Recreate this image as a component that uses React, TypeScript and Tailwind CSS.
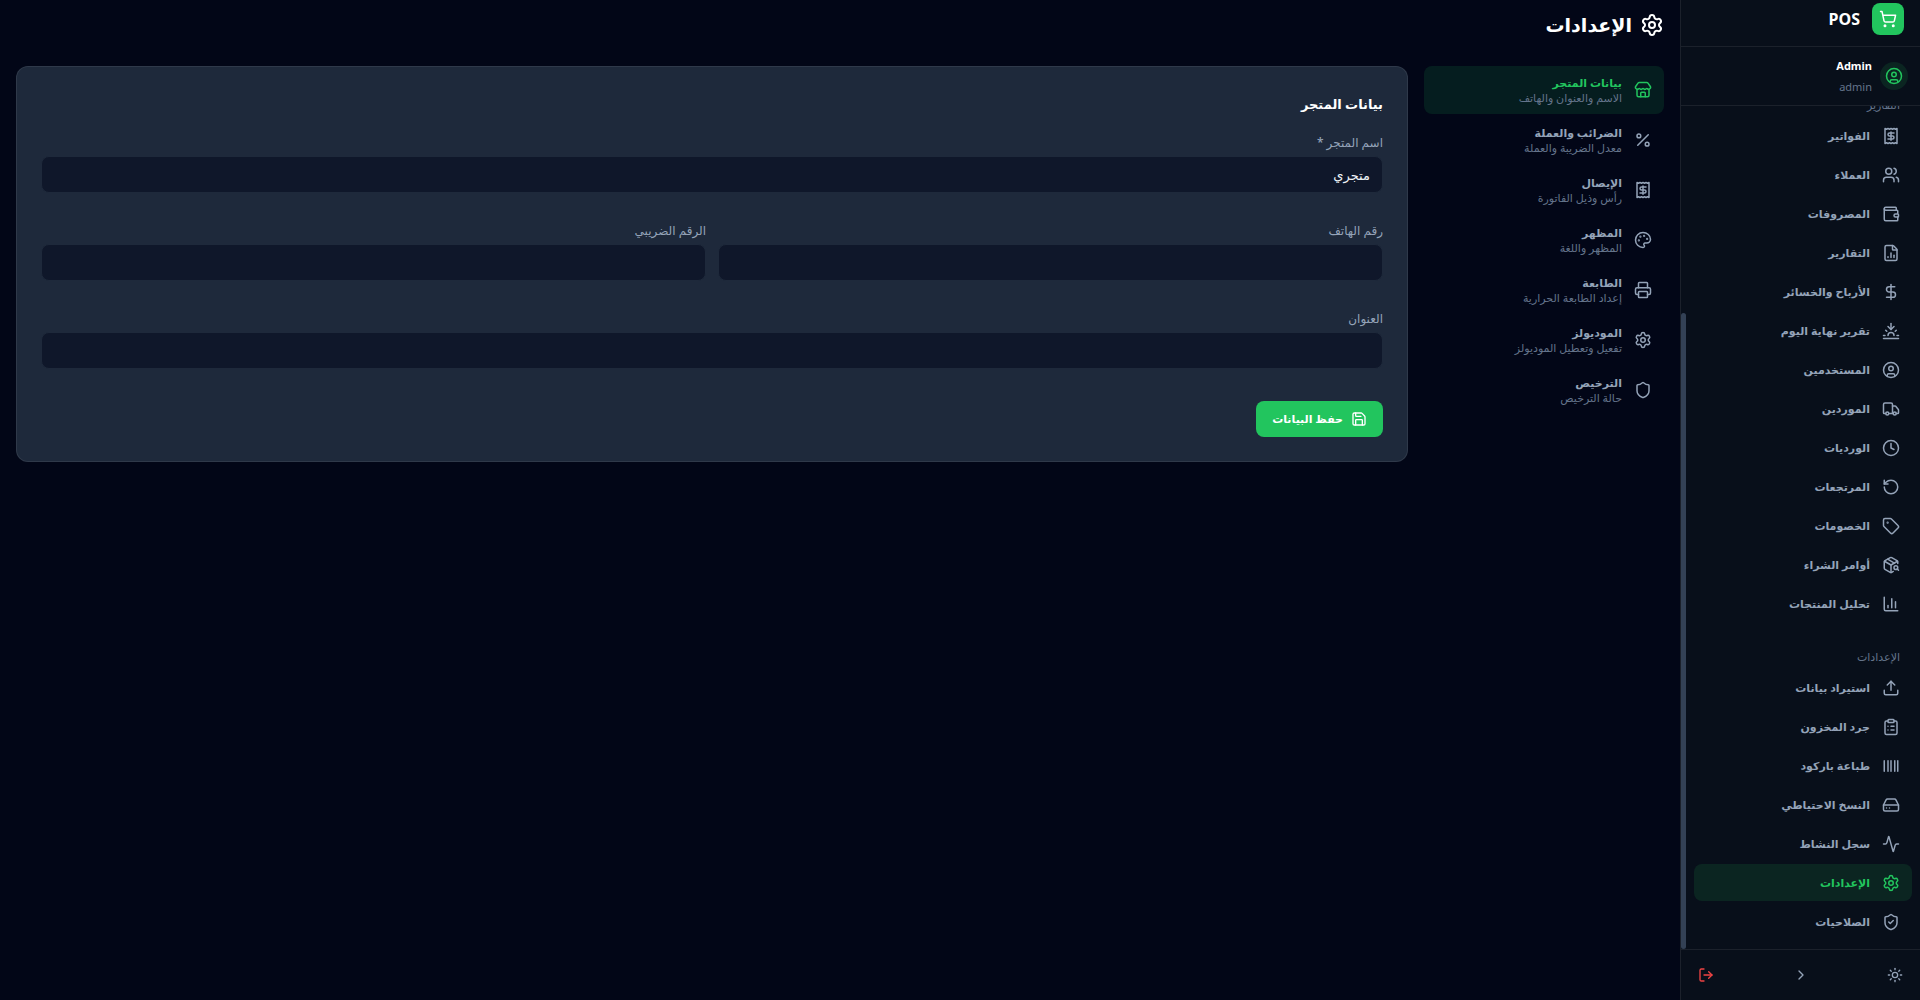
import {
  Activity,
  Barcode,
  ChartColumn,
  ChevronRight,
  CircleUser,
  ClipboardList,
  Clock,
  DollarSign,
  FileChartColumn,
  HardDrive,
  LogOut,
  PackageSearch,
  Palette,
  Percent,
  Printer,
  Receipt,
  RotateCcw,
  Save,
  Settings,
  Shield,
  ShieldCheck,
  ShoppingCart,
  Store,
  Sun,
  Sunset,
  Tag,
  Truck,
  Upload,
  Users,
  Wallet,
} from 'lucide-react';
import type { ComponentType } from 'react';

type Icon = ComponentType<{ size?: number | string; className?: string }>;

interface NavItem {
  label: string;
  icon: Icon;
}

const reportItems: NavItem[] = [
  { label: 'الفواتير', icon: Receipt },
  { label: 'العملاء', icon: Users },
  { label: 'المصروفات', icon: Wallet },
  { label: 'التقارير', icon: FileChartColumn },
  { label: 'الأرباح والخسائر', icon: DollarSign },
  { label: 'تقرير نهاية اليوم', icon: Sunset },
  { label: 'المستخدمين', icon: CircleUser },
  { label: 'الموردين', icon: Truck },
  { label: 'الورديات', icon: Clock },
  { label: 'المرتجعات', icon: RotateCcw },
  { label: 'الخصومات', icon: Tag },
  { label: 'أوامر الشراء', icon: PackageSearch },
  { label: 'تحليل المنتجات', icon: ChartColumn },
];

const settingsItems: NavItem[] = [
  { label: 'استيراد بيانات', icon: Upload },
  { label: 'جرد المخزون', icon: ClipboardList },
  { label: 'طباعة باركود', icon: Barcode },
  { label: 'النسخ الاحتياطي', icon: HardDrive },
  { label: 'سجل النشاط', icon: Activity },
  { label: 'الإعدادات', icon: Settings },
  { label: 'الصلاحيات', icon: ShieldCheck },
];

const tabs = [
  { label: 'بيانات المتجر', desc: 'الاسم والعنوان والهاتف', icon: Store },
  { label: 'الضرائب والعملة', desc: 'معدل الضريبة والعملة', icon: Percent },
  { label: 'الإيصال', desc: 'رأس وذيل الفاتورة', icon: Receipt },
  { label: 'المظهر', desc: 'المظهر واللغة', icon: Palette },
  { label: 'الطابعة', desc: 'إعداد الطابعة الحرارية', icon: Printer },
  { label: 'الموديولز', desc: 'تفعيل وتعطيل الموديولز', icon: Settings },
  { label: 'الترخيص', desc: 'حالة الترخيص', icon: Shield },
];

function NavGroup({ title, items, active }: { title: string; items: NavItem[]; active?: string }) {
  return (
    <div className="shrink-0">
      <h2 className="px-3 pt-2 pb-[3px] text-[11px] leading-[18px] font-medium text-[#64748b]">{title}</h2>
      {items.map(({ label, icon: Icon }) => (
        <a
          key={label}
          href="#"
          className={`mb-0.5 flex items-center gap-3 rounded-lg px-3 py-2 text-[11px] leading-[21px] font-semibold ${
            label === active ? 'bg-[#22c55e]/12 text-[#22c55e]' : 'text-[#94a3b8]'
          }`}
        >
          <Icon size={18} className="shrink-0" />
          <span>{label}</span>
        </a>
      ))}
    </div>
  );
}

function Sidebar() {
  return (
    <aside className="flex w-60 shrink-0 flex-col border-l border-white/8 bg-[#080f1a]">
      <div className="flex h-[47px] shrink-0 items-center gap-3 border-b border-white/8 px-4 pb-2">
        <div className="flex size-8 items-center justify-center rounded-lg bg-[#22c55e] text-white">
          <ShoppingCart size={18} />
        </div>
        <span className="text-base leading-6 font-bold text-white">POS</span>
      </div>

      <div className="flex h-[59px] shrink-0 items-center gap-2 border-b border-white/8 px-3">
        <div className="flex size-7 items-center justify-center rounded-full bg-[#22c55e]/12 text-[#22c55e]">
          <CircleUser size={18} />
        </div>
        <div>
          <p className="text-[11px] leading-[21px] font-bold text-white">Admin</p>
          <p className="text-[11px] leading-[21px] text-[#64748b]">admin</p>
        </div>
      </div>

      <div className="flex min-h-0 flex-1">
        <nav className="flex min-w-0 flex-1 flex-col justify-end gap-4 overflow-hidden px-2 pb-[7px]">
          <NavGroup title="التقارير" items={reportItems} />
          <NavGroup title="الإعدادات" items={settingsItems} active="الإعدادات" />
        </nav>
        <div className="flex w-[5px] flex-col justify-end">
          <div className="h-[75.5%] rounded-full bg-[#334155]" />
        </div>
      </div>

      <div className="flex h-[51px] shrink-0 items-center justify-between border-t border-white/8 px-2 text-[#94a3b8]">
        <button type="button" aria-label="المظهر" className="flex size-[34px] items-center justify-center">
          <Sun size={16} />
        </button>
        <button type="button" aria-label="طي القائمة" className="flex size-[34px] items-center justify-center">
          <ChevronRight size={16} />
        </button>
        <button type="button" aria-label="خروج" className="flex size-[34px] items-center justify-center text-[#ef4444]">
          <LogOut size={16} />
        </button>
      </div>
    </aside>
  );
}

function Field({ id, label, value = '' }: { id: string; label: string; value?: string }) {
  return (
    <div className="mb-7">
      <label htmlFor={id} className="mb-1 block text-xs leading-[19px] font-medium text-[#94a3b8]">
        {label}
      </label>
      <input
        id={id}
        type="text"
        defaultValue={value}
        className="block h-[37px] w-full rounded-lg border border-[#1e293b] bg-[#0f172a] px-3 text-[13px] text-[#f1f5f9] outline-none"
      />
    </div>
  );
}

export default function App() {
  return (
    <div
      dir="rtl"
      className="flex h-screen overflow-hidden bg-[#020617] font-['Noto_Sans','DejaVu_Sans',sans-serif] text-[#f1f5f9]"
    >
      <Sidebar />

      <main className="min-w-0 flex-1 px-4 pt-2">
        <h1 className="mb-6 flex items-center gap-2 text-[19px] leading-[34px] font-bold text-white">
          <Settings size={24} />
          الإعدادات
        </h1>

        <div className="flex items-start gap-4">
          <div className="flex w-60 shrink-0 flex-col gap-0.5">
            {tabs.map(({ label, desc, icon: Icon }, i) => (
              <button
                key={label}
                type="button"
                className={`flex h-12 items-center gap-3 rounded-lg px-3 text-right ${
                  i === 0 ? 'bg-[#22c55e]/12 text-[#22c55e]' : 'text-[#94a3b8]'
                }`}
              >
                <Icon size={18} className="shrink-0" />
                <span>
                  <span className="block text-[11px] leading-4 font-semibold">{label}</span>
                  <span className="block text-[11px] leading-[14px] text-[#64748b]">{desc}</span>
                </span>
              </button>
            ))}
          </div>

          <form className="min-w-0 flex-1 rounded-xl border border-white/8 bg-[#1e293b] p-6">
            <h2 className="mb-4 text-[13px] leading-[26px] font-semibold text-white">بيانات المتجر</h2>
            <Field id="store-name" label="اسم المتجر *" value="متجري" />
            <div className="grid grid-cols-2 gap-3">
              <Field id="phone" label="رقم الهاتف" />
              <Field id="tax-number" label="الرقم الضريبي" />
            </div>
            <Field id="address" label="العنوان" />
            <button
              type="button"
              className="mt-8 flex h-9 items-center gap-2 rounded-lg bg-[#22c55e] px-4 text-[11px] font-semibold text-white"
            >
              <Save size={16} />
              حفظ البيانات
            </button>
          </form>
        </div>
      </main>
    </div>
  );
}
